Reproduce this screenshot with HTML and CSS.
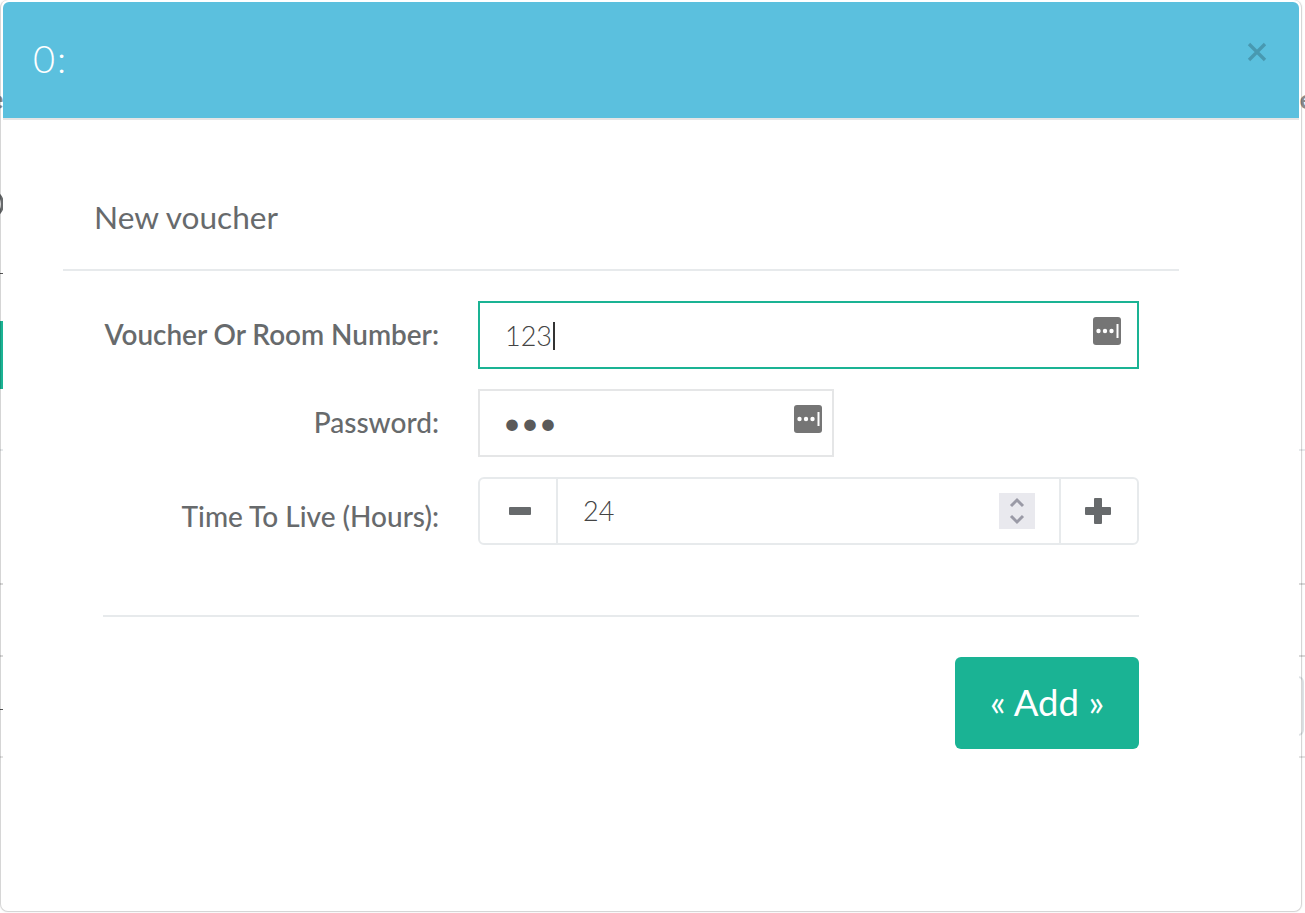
FILE: index.html
```html
<!DOCTYPE html>
<html lang="en">
<head>
<meta charset="utf-8">
<title>New voucher</title>
<link rel="stylesheet" href="styles.css">
</head>
<body>
<div class="backdrop" aria-hidden="true">
  <div class="bd-row bd-text"><span class="bd-e-left">e</span><span class="bd-e-right">e</span></div>
  <div class="bd-row bd-arc-row"><span class="bd-arc"></span></div>
  <div class="bd-row bd-dash-top"><span class="bd-dash"></span></div>
  <div class="bd-row bd-active"></div>
  <div class="bd-row bd-line bd-line-1"></div>
  <div class="bd-row bd-line bd-line-2"></div>
  <div class="bd-row bd-line bd-line-3">
    <span class="bd-dash bd-dash-low"></span>
    <span class="bd-input"></span>
  </div>
</div>

<div class="modal">
  <div class="modal-inner">
    <header class="modal-header">
      <h4 class="modal-title">0:</h4>
      <button class="close" type="button" aria-label="Close">
        <svg width="20" height="20" viewBox="0 0 20 20"><path d="M2 2 L18 18 M18 2 L2 18" fill="none" stroke="currentColor" stroke-width="3.4"/></svg>
      </button>
    </header>
    <section class="panel">
      <h5 class="panel-title">New voucher</h5>
      <form class="form">
        <label class="label label-strong">Voucher Or Room Number:</label>
        <div class="field field-focus">
          <input class="input" type="text" value="123">
          <span class="caret"></span>
          <svg class="key" width="28" height="28" viewBox="0 0 28 28"><rect width="28" height="28" rx="3" fill="#757575"/><circle cx="5.5" cy="14" r="2.2" fill="#fff"/><circle cx="12" cy="14" r="2.2" fill="#fff"/><circle cx="18.5" cy="14" r="2.2" fill="#fff"/><rect x="23.5" y="7" width="2" height="14" fill="#fff"/></svg>
        </div>
        <label class="label">Password:</label>
        <div class="field field-short">
          <input class="input input-pass" type="password" value="123">
          <svg class="key key-short" width="28" height="28" viewBox="0 0 28 28"><rect width="28" height="28" rx="3" fill="#757575"/><circle cx="5.5" cy="14" r="2.2" fill="#fff"/><circle cx="12" cy="14" r="2.2" fill="#fff"/><circle cx="18.5" cy="14" r="2.2" fill="#fff"/><rect x="23.5" y="7" width="2" height="14" fill="#fff"/></svg>
        </div>
        <label class="label label-low">Time To Live (Hours):</label>
        <div class="stepper">
          <button class="step step-minus" type="button" aria-label="Decrease">
            <svg width="22" height="8" viewBox="0 0 22 8"><rect width="22" height="8" rx="1" fill="#676a6c"/></svg>
          </button>
          <div class="step-value">
            <input class="input input-num" type="text" value="24">
            <span class="spin">
              <svg width="16" height="28" viewBox="0 0 16 28"><path d="M2 9 L8 3 L14 9 M2 19 L8 25 L14 19" fill="none" stroke="#9a9aa6" stroke-width="3"/></svg>
            </span>
          </div>
          <button class="step step-plus" type="button" aria-label="Increase">
            <svg width="26" height="26" viewBox="0 0 26 26"><path d="M9 1 a1 1 0 0 1 1-1 h6 a1 1 0 0 1 1 1 v8 h8 a1 1 0 0 1 1 1 v6 a1 1 0 0 1-1 1 h-8 v8 a1 1 0 0 1-1 1 h-6 a1 1 0 0 1-1-1 v-8 h-8 a1 1 0 0 1-1-1 v-6 a1 1 0 0 1 1-1 h8 z" fill="#676a6c"/></svg>
          </button>
        </div>
      </form>
      <div class="actions">
        <button class="add" type="button">« Add »</button>
      </div>
    </section>
  </div>
</div>
</body>
</html>
```
FILE: styles.css
```css
* { box-sizing: border-box; }
html, body { margin: 0; padding: 0; }
body {
  width: 1305px;
  height: 913px;
  overflow: hidden;
  background: #fff;
  color: #676a6c;
  font-family: Lato, "Open Sans", sans-serif;
  position: relative;
}

/* page showing behind the dialog */
.backdrop { height: 913px; overflow: hidden; display: flex; flex-direction: column; }
.bd-row { flex: none; display: flex; justify-content: space-between; }
.bd-text { height: 24px; margin-top: 87px; font-size: 27px; line-height: 24px; font-weight: 700; color: #8a8c8e; }
.bd-e-left { margin-left: -11px; }
.bd-e-right { margin-right: -9px; }
.bd-arc-row { height: 30px; margin-top: 78px; }
.bd-arc { width: 30px; height: 30px; margin-left: -26px; border-radius: 50%; border: 3px solid #676a6c; }
.bd-dash-top { height: 1px; margin-top: 54px; }
.bd-dash { width: 3px; height: 1px; background: #555; }
.bd-active { height: 68px; margin-top: 47px; border-left: 3px solid #1ab394; }
.bd-line { border-top: 2px solid #e7eaec; }
.bd-line-1 { margin-top: 60px; height: 2px; }
.bd-line-2 { margin-top: 132px; height: 2px; border-top-color: #d9d9d9; }
.bd-line-3 { margin-top: 70px; height: 103px; border-top-color: #d9d9d9; border-bottom: 2px solid #e3e3e3; align-items: flex-start; }
.bd-dash-low { margin-top: 52px; }
.bd-input { width: 12px; height: 60px; margin-top: 19px; margin-right: 1px; border: 2px solid #dfe3e6; border-radius: 6px; }

/* dialog */
.modal {
  position: absolute;
  left: 0;
  top: 0;
  width: 1302px;
  height: 912px;
  padding: 2px 2px 1px 2px;
  border: 1px solid rgba(0, 0, 0, .16);
  border-top: 0;
  border-radius: 8px;
  background: transparent;
  box-shadow: 0 0 2px rgba(0, 0, 0, .1);
}
.modal-inner { height: 100%; background: #fff; border-radius: 6px; overflow: hidden; }
.modal-header {
  height: 118px;
  background: #5bc0de;
  border-bottom: 2px solid #e5e5e5;
  display: flex;
  justify-content: space-between;
  padding: 0 30px;
}
.modal-title { margin: 0; padding-top: 33px; font-size: 38px; line-height: 46px; font-weight: 300; letter-spacing: 2px; color: #fff; }
.close {
  align-self: flex-start;
  margin: 40px 2px 0 0;
  padding: 0;
  border: 0;
  background: none;
  color: rgba(0, 0, 0, .2);
  line-height: 0;
}

.panel { width: 1116px; margin-left: 60px; }
.panel-title {
  margin: 0;
  height: 151px;
  padding: 77px 0 0 31px;
  border-bottom: 2px solid #e7eaec;
  font-size: 31.6px;
  line-height: 40px;
  font-weight: 400;
}
.form {
  display: grid;
  grid-template-columns: 336px 661px;
  column-gap: 39px;
  row-gap: 20px;
  margin: 30px 40px 0;
}
.label {
  align-self: center;
  margin-top: -2px;
  text-align: right;
  font-size: 28px;
  font-weight: 500;
  white-space: nowrap;
}
.label-strong { font-size: 27.9px; font-weight: 600; }
.label-low { margin-top: 9px; }
.field {
  position: relative;
  height: 68px;
  display: flex;
  align-items: center;
  border: 2px solid #e5e6e7;
}
.field-focus { border-color: #1ab394; }
.field-short { width: 356px; }
.input {
  flex: 1;
  min-width: 0;
  height: 100%;
  padding: 0 25px;
  border: 0;
  outline: 0;
  background: none;
  color: #444;
  font-family: inherit;
  font-size: 27px;
  font-weight: 300;
}
.input-pass { padding: 0 25px 2px 23px; font-size: 31px; font-weight: 400; color: #5a5a5a; }
.input-num { padding-bottom: 2px; }
.caret { position: absolute; left: 73px; top: 19px; width: 2px; height: 28px; background: #333; }
.key { position: absolute; right: 16px; top: 14px; }
.key-short { right: 10px; }
.stepper {
  height: 68px;
  display: flex;
  border: 2px solid #e7eaec;
  border-radius: 6px;
}
.step {
  flex: none;
  width: 76px;
  padding: 0;
  border: 0;
  background: none;
  display: flex;
  align-items: center;
  justify-content: center;
}
.step-minus { padding-left: 3px; }
.step-plus { padding-right: 2px; }
.step-value {
  flex: 1;
  position: relative;
  display: flex;
  align-items: center;
  border-left: 2px solid #e7eaec;
  border-right: 2px solid #e7eaec;
}
.spin {
  position: absolute;
  right: 24px;
  top: 14px;
  width: 36px;
  height: 36px;
  background: #e9e9ee;
  display: flex;
  align-items: center;
  justify-content: center;
}
.actions {
  margin: 70px 40px 0;
  padding-top: 40px;
  border-top: 2px solid #e7eaec;
  display: flex;
  justify-content: flex-end;
}
.add {
  width: 184px;
  height: 92px;
  padding: 0 0 2px;
  border: 0;
  border-radius: 6px;
  background: #1ab394;
  color: #fff;
  font-family: inherit;
  font-size: 36.6px;
}
```
